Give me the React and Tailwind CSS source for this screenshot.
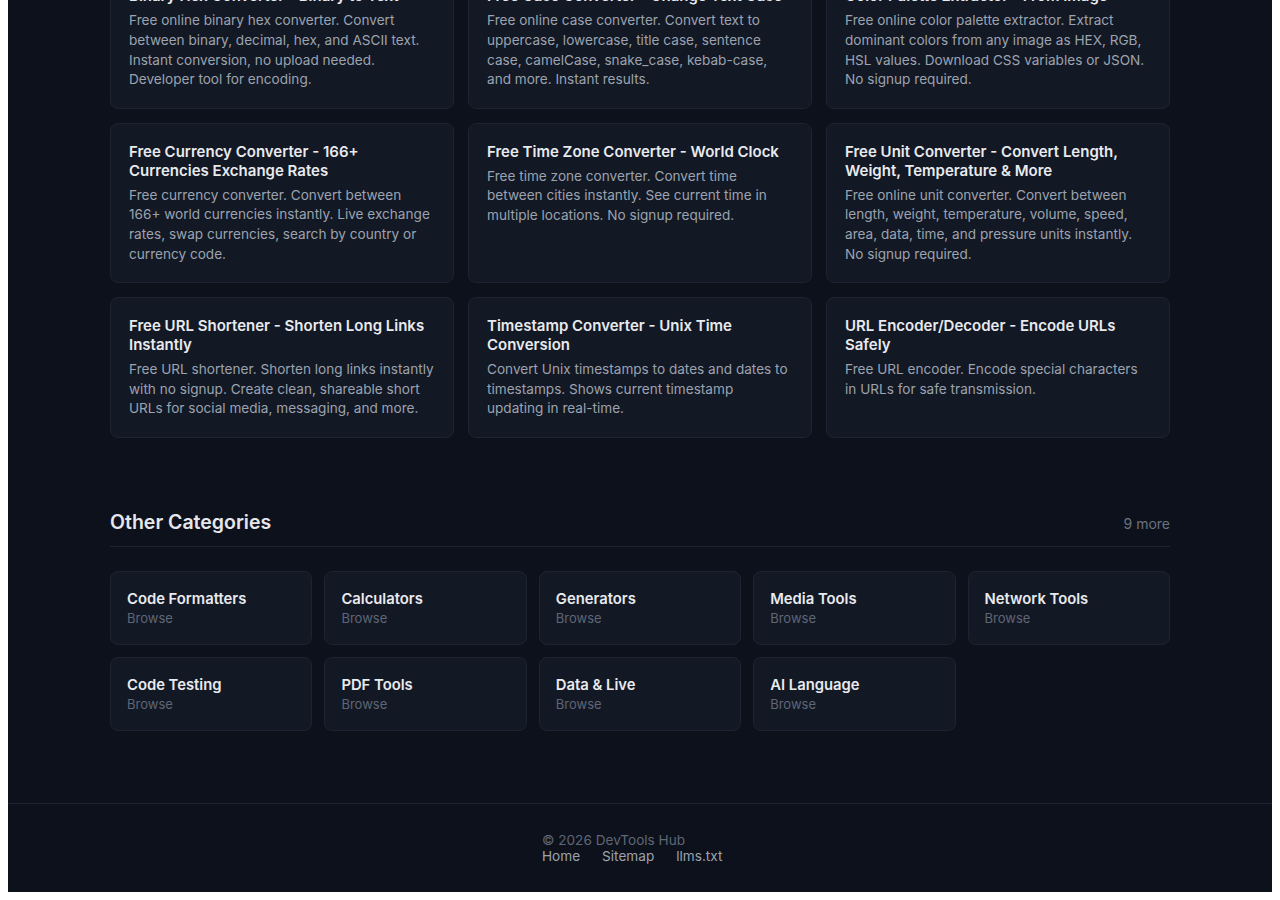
import React from 'react';

const TOOLS = [
  {
    title: 'Binary Hex Converter - Binary to Text',
    desc: 'Free online binary hex converter. Convert between binary, decimal, hex, and ASCII text. Instant conversion, no upload needed. Developer tool for encoding.',
  },
  {
    title: 'Free Case Converter - Change Text Case',
    desc: 'Free online case converter. Convert text to uppercase, lowercase, title case, sentence case, camelCase, snake_case, kebab-case, and more. Instant results.',
  },
  {
    title: 'Color Palette Extractor - From Image',
    desc: 'Free online color palette extractor. Extract dominant colors from any image as HEX, RGB, HSL values. Download CSS variables or JSON. No signup required.',
  },
  {
    title: 'Free Currency Converter - 166+ Currencies Exchange Rates',
    desc: 'Free currency converter. Convert between 166+ world currencies instantly. Live exchange rates, swap currencies, search by country or currency code.',
  },
  {
    title: 'Free Time Zone Converter - World Clock',
    desc: 'Free time zone converter. Convert time between cities instantly. See current time in multiple locations. No signup required.',
  },
  {
    title: 'Free Unit Converter - Convert Length, Weight, Temperature & More',
    desc: 'Free online unit converter. Convert between length, weight, temperature, volume, speed, area, data, time, and pressure units instantly. No signup required.',
  },
  {
    title: 'Free URL Shortener - Shorten Long Links Instantly',
    desc: 'Free URL shortener. Shorten long links instantly with no signup. Create clean, shareable short URLs for social media, messaging, and more.',
  },
  {
    title: 'Timestamp Converter - Unix Time Conversion',
    desc: 'Convert Unix timestamps to dates and dates to timestamps. Shows current timestamp updating in real-time.',
  },
  {
    title: 'URL Encoder/Decoder - Encode URLs Safely',
    desc: 'Free URL encoder. Encode special characters in URLs for safe transmission.',
  },
];

const CATEGORIES = [
  'Code Formatters',
  'Calculators',
  'Generators',
  'Media Tools',
  'Network Tools',
  'Code Testing',
  'PDF Tools',
  'Data & Live',
  'AI Language',
];

export default function App() {
  return (
    <div
      className="h-[900px] overflow-hidden bg-white px-2 pb-2 flex flex-col justify-end"
      style={{ fontFamily: 'Inter, "Noto Sans", sans-serif' }}
    >
      <div className="shrink-0 bg-[#0d111b]">
        <main className="mx-auto w-[1060px]">
          <div className="grid grid-cols-3 gap-[14px]">
            {TOOLS.map((t) => (
              <a
                key={t.title}
                href="#"
                className="block rounded-lg border border-[#1d2331] bg-[#131825] p-[18px]"
              >
                <h3 className="text-[15px] font-semibold leading-[19px] text-[#e8eaee]">
                  {t.title}
                </h3>
                <p className="mt-1.5 text-[13.6px] leading-[19.6px] text-[#9ca3af]">{t.desc}</p>
              </a>
            ))}
          </div>

          <section className="mt-[70px]">
            <div className="flex items-center justify-between border-b border-[#1d2331] pb-2.5">
              <h2 className="text-[19.5px] font-semibold leading-7 text-[#e5e7eb]">Other Categories</h2>
              <span className="mt-1 text-sm text-[#6b7280]">9 more</span>
            </div>
            <div className="mt-6 grid grid-cols-5 gap-3">
              {CATEGORIES.map((c) => (
                <a
                  key={c}
                  href="#"
                  className="block rounded-lg border border-[#1d2331] bg-[#131825] p-4"
                >
                  <div className="pt-px text-[14.8px] font-semibold leading-5 text-[#e8eaee]">{c}</div>
                  <div className="-mt-px text-[13px] leading-5 text-[#5f6675]">Browse</div>
                </a>
              ))}
            </div>
          </section>
        </main>

        <footer className="mt-[72px] border-t border-[#1d2331] py-7">
          <div className="mx-auto w-[196px] text-[13.6px] leading-4">
            <div className="text-[#5f6675]">© 2026 DevTools Hub</div>
            <div className="flex gap-[22px] text-[#9ca3af]">
              <a href="#">Home</a>
              <a href="#">Sitemap</a>
              <a href="#">llms.txt</a>
            </div>
          </div>
        </footer>
      </div>
    </div>
  );
}
